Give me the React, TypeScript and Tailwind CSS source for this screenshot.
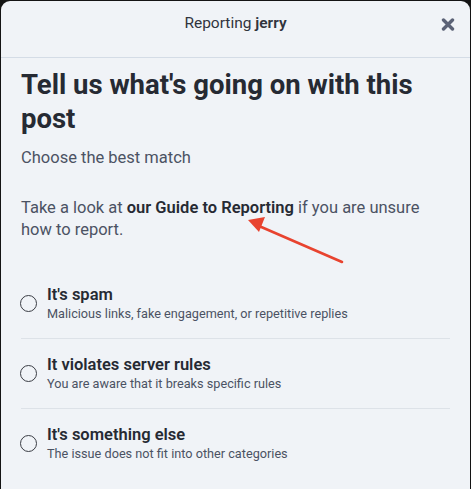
import React, { useState } from 'react';

const options = [
  { id: 'spam', title: "It's spam", desc: 'Malicious links, fake engagement, or repetitive replies' },
  { id: 'rules', title: 'It violates server rules', desc: 'You are aware that it breaks specific rules' },
  { id: 'other', title: "It's something else", desc: 'The issue does not fit into other categories' },
];

const App: React.FC = () => {
  const [selected, setSelected] = useState<string | null>(null);

  return (
    <div className="w-full h-[489px] overflow-hidden bg-[#141414] pt-[1px] px-[1px] font-['Roboto',sans-serif]">
      <div className="relative h-full rounded-t-[9px] bg-[#f0f3f7]">
        {/* header */}
        <div className="relative h-[57px] border-b border-[#d4dce6] pt-[10px] text-center text-[15.5px] leading-6 text-[#30343d]">
          Reporting <span className="font-semibold">jerry</span>
          <button className="absolute right-[15px] top-[17px] text-[#5b6276]">
            <svg width="14" height="13" viewBox="0 0 14 13">
              <path d="M2.5 2 L11.5 11 M11.5 2 L2.5 11" stroke="currentColor" strokeWidth="3.4" strokeLinecap="round" />
            </svg>
          </button>
        </div>

        <div className="px-[20px]">
          <h1 className="mt-[10px] text-[27.5px] leading-[34px] font-bold text-[#262a33]">
            Tell us what's going on with this post
          </h1>
          <p className="mt-[11px] text-[16.5px] leading-[22px] text-[#4b5263]">Choose the best match</p>
          <p className="mt-[28px] text-[16.5px] leading-[22px] text-[#4b5263]">
            Take a look at <span className="font-semibold text-[#262a33]">our Guide to Reporting</span> if you are unsure how to report.
          </p>

          <div className="mt-[28px]">
            {options.map((o, i) => (
              <label
                key={o.id}
                className={`flex items-center gap-[10px] py-[16px] cursor-pointer ${
                  i < options.length - 1 ? 'border-b border-[#dde2e8]' : ''
                }`}
                onClick={() => setSelected(o.id)}
              >
                <span className="-ml-[1px] flex h-[17px] w-[17px] shrink-0 items-center justify-center rounded-full border-[1.5px] border-[#3a3d44]">
                  {selected === o.id && <span className="h-[9px] w-[9px] rounded-full bg-[#3a3d44]" />}
                </span>
                <span className="flex flex-col">
                  <span className="text-[16.5px] leading-5 font-semibold text-[#262a33]">{o.title}</span>
                  <span className="text-[12.7px] leading-[17px] text-[#4b5263]">{o.desc}</span>
                </span>
              </label>
            ))}
          </div>
        </div>

        {/* annotation arrow */}
        <svg className="absolute left-0 top-0 pointer-events-none" width="469" height="488">
          <line x1="341" y1="261" x2="258" y2="225" stroke="#e8432f" strokeWidth="2.6" strokeLinecap="round" />
          <polygon points="247,219 264,216 258,231" fill="#e8432f" />
        </svg>
      </div>
    </div>
  );
};

export default App;
